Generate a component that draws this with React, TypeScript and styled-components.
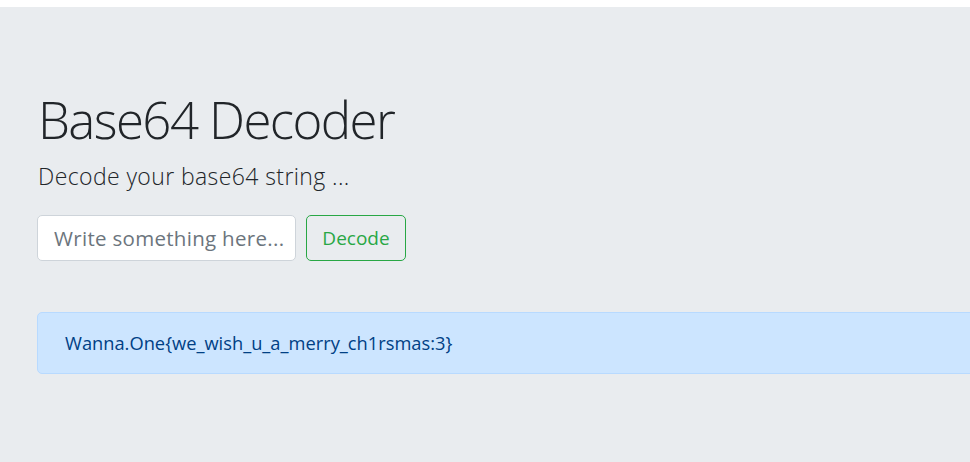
import React from 'react';
import styled, { createGlobalStyle } from 'styled-components';

const GlobalStyle = createGlobalStyle`
  html, body {
    margin: 0;
    padding: 0;
    background: #fff;
    overflow: hidden;
  }
  body {
    font-family: "Open Sans", "Noto Sans", sans-serif;
    color: #212529;
  }
`;

const Page = styled.div`
  padding-top: 7px;
  width: 970px;
  height: 462px;
  overflow: hidden;
`;

const Jumbotron = styled.section`
  background-color: #e9ecef;
  padding: 81px 0 80px 37px;
  width: 1200px;
  min-height: 455px;
  box-sizing: border-box;
`;

const Title = styled.h1`
  margin: 0 0 0 1px;
  font-size: 51px;
  line-height: 62px;
  font-weight: 300;
  letter-spacing: -1.6px;
  color: #212529;
`;

const Lead = styled.p`
  margin: 11px 0 0 1px;
  font-size: 23px;
  line-height: 30px;
  font-weight: 300;
  letter-spacing: 0.4px;
`;

const Form = styled.form`
  display: flex;
  gap: 10px;
  margin-top: 24px;
`;

const Input = styled.input`
  box-sizing: border-box;
  width: 259px;
  height: 46px;
  padding: 0 8px 0 16px;
  font-family: inherit;
  font-size: 20.5px;
  letter-spacing: 0.3px;
  color: #495057;
  background: #fff;
  border: 1px solid #ced4da;
  border-radius: 5px;
  outline: none;
  &::placeholder {
    color: #6c757d;
  }
`;

const OutlineButton = styled.button<{ $tone: string }>`
  box-sizing: border-box;
  width: 100px;
  height: 46px;
  padding: 0;
  font-family: inherit;
  font-size: 19px;
  color: ${(p) => p.$tone};
  background: transparent;
  border: 1px solid ${(p) => p.$tone};
  border-radius: 5px;
  cursor: pointer;
`;

const Alert = styled.div`
  margin-top: 51px;
  width: 1100px;
  box-sizing: border-box;
  padding: 17px 26px 17px 27px;
  font-size: 18.3px;
  line-height: 26px;
  color: #004085;
  background-color: #cce5ff;
  border: 1px solid #b8daff;
  border-radius: 5px;
`;

export default function App() {
  return (
    <>
      <GlobalStyle />
      <Page>
        <Jumbotron>
          <Title>Base64 Decoder</Title>
          <Lead>Decode your base64 string ...</Lead>
          <Form onSubmit={(e) => e.preventDefault()}>
            <Input type="text" placeholder="Write something here..." />
            <OutlineButton type="submit" $tone="#28a745">
              Decode
            </OutlineButton>
          </Form>
          <Alert>Wanna.One{'{'}we_wish_u_a_merry_ch1rsmas:3{'}'}</Alert>
        </Jumbotron>
      </Page>
    </>
  );
}
